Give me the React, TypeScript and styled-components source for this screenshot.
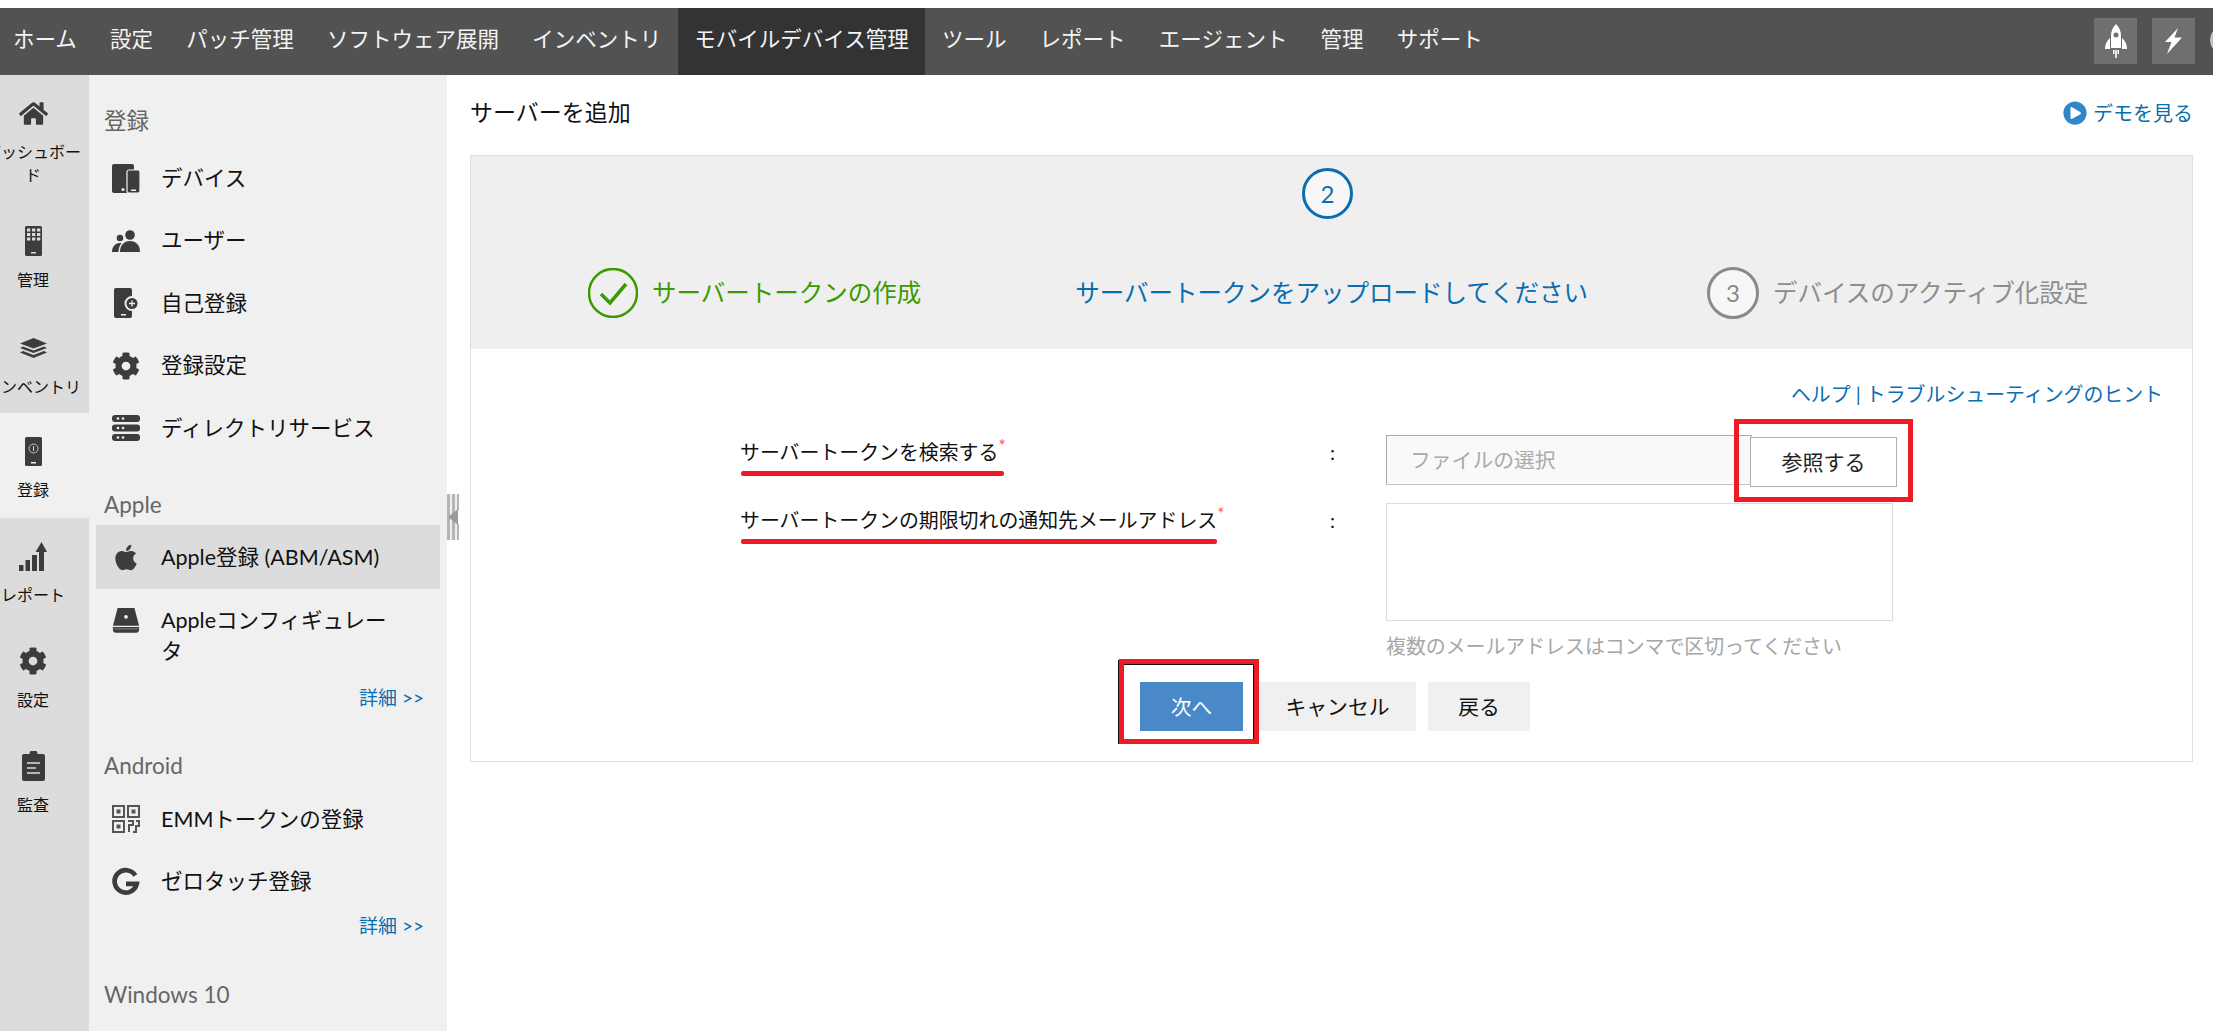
import React from "react";
import styled, { createGlobalStyle } from "styled-components";
import { FaApple, FaCog, FaHome, FaPlayCircle } from "react-icons/fa";

const Global = createGlobalStyle`
  html, body { margin: 0; padding: 0; background: #fff; }
  body { height: 1031px; overflow: hidden; font-family: Lato, "Noto Sans CJK JP", "Noto Sans", sans-serif; }
  * { box-sizing: border-box; }
`;

const Page = styled.div`
  width: 2213px;
  height: 1031px;
  padding-top: 8px;
  display: flex;
  flex-direction: column;
  overflow: hidden;
`;

const TopBar = styled.header`
  height: 67px;
  flex: none;
  background: #525252;
  display: flex;
  align-items: stretch;
  overflow: hidden;
`;

const NavItem = styled.div<{ $active?: boolean }>`
  padding: 0 16.6px 8px;
  display: flex;
  align-items: center;
  font-size: 21.5px;
  color: #f4f4f4;
  white-space: nowrap;
  background: ${(p) => (p.$active ? "#333333" : "transparent")};
  &:first-child { padding-left: 13px; }
`;

const TopTools = styled.div`
  margin-left: auto;
  display: flex;
  align-items: flex-start;
  gap: 15px;
  padding-top: 10px;
  margin-right: -27px;
`;

const ToolButton = styled.div`
  width: 43px;
  height: 46px;
  background: #6f6f6f;
  color: #fff;
  display: flex;
  align-items: center;
  justify-content: center;
`;

const ToolDot = styled.div`
  width: 30px;
  height: 30px;
  margin-top: 7px;
  border-radius: 50%;
  background: #c4c4c4;
`;

const Body = styled.div`
  flex: 1;
  display: flex;
  min-height: 0;
`;

const Rail = styled.nav`
  width: 89px;
  flex: none;
  background: #dcdcdc;
  overflow: hidden;
`;

const RailItem = styled.div<{ $h: number; $active?: boolean }>`
  height: ${(p) => p.$h}px;
  width: 89px;
  padding: 24px 23px 0 0;
  display: flex;
  flex-direction: column;
  align-items: center;
  background: ${(p) => (p.$active ? "#f0f0f0" : "transparent")};
  color: #3c3c3c;
`;

const RailIcon = styled.div`
  height: 28px;
  display: flex;
  align-items: center;
  justify-content: center;
`;

const RailLabel = styled.div`
  margin-top: 13px;
  font-size: 16px;
  line-height: 23px;
  color: #111;
  text-align: center;
  white-space: nowrap;
`;

const Panel = styled.aside`
  width: 358px;
  flex: none;
  background: #f0f0f0;
  padding: 29px 7px 0;
  overflow: hidden;
`;

const PanelTitle = styled.div<{ $mt?: number; $mb: number }>`
  margin-top: ${(p) => p.$mt ?? 0}px;
  margin-bottom: ${(p) => p.$mb}px;
  padding-left: 8px;
  height: 34px;
  line-height: 34px;
  font-size: 22.5px;
  color: #666;
`;

const PanelItem = styled.div<{ $active?: boolean }>`
  height: ${(p) => (p.$active ? 64 : 62.5)}px;
  width: 344px;
  display: flex;
  align-items: center;
  padding: 0 16px;
  font-size: 21.5px;
  line-height: 31px;
  color: #111;
  background: ${(p) => (p.$active ? "#dcdcdc" : "transparent")};
`;

const WrappedPanelItem = styled(PanelItem)`
  height: 96px;
  align-items: flex-start;
  padding: 16px 48px 0 16px;
`;

const PanelIcon = styled.div`
  width: 28px;
  height: 30px;
  flex: none;
  margin-right: 21px;
  color: #3c3c3c;
  display: flex;
  align-items: center;
  justify-content: center;
`;

const MoreLink = styled.div`
  width: 328px;
  height: 26px;
  line-height: 26px;
  text-align: right;
  font-size: 19px;
  color: #0a6db0;
`;

const Splitter = styled.div`
  width: 23px;
  flex: none;
  padding-top: 419px;
`;

const Handle = styled.div`
  position: relative;
  width: 12px;
  height: 46px;
  background: repeating-linear-gradient(90deg, #b5b5b5 0 3px, #efefef 3px 5px);
  &::after {
    content: "";
    position: absolute;
    left: 1px;
    top: 15px;
    border-style: solid;
    border-width: 8px 10px 8px 0;
    border-color: transparent #9a9a9a transparent transparent;
    filter: drop-shadow(2px 0 0 #fff);
  }
`;

const Main = styled.main`
  flex: 1;
  min-width: 0;
  padding-right: 20px;
`;

const TitleRow = styled.div`
  height: 80px;
  display: flex;
  align-items: flex-start;
  justify-content: space-between;
  padding-top: 20px;
`;

const PageTitle = styled.h1`
  margin: 0;
  font-size: 23px;
  line-height: 34px;
  font-weight: 400;
  color: #111;
`;

const DemoLink = styled.div`
  margin-top: 1px;
  display: flex;
  align-items: center;
  gap: 6px;
  font-size: 20px;
  line-height: 34px;
  color: #0a6db0;
  svg { color: #2f87c8; }
`;

const Card = styled.section`
  height: 607px;
  border: 1px solid #dfdfdf;
  display: flex;
  flex-direction: column;
`;

const StepHeader = styled.div`
  height: 193px;
  flex: none;
  background: #efefef;
  display: flex;
  flex-direction: column;
  align-items: center;
  padding-top: 12px;
`;

const StepBadge = styled.div<{ $color: string; $size?: number; $shift?: number }>`
  width: ${(p) => p.$size ?? 51}px;
  height: ${(p) => p.$size ?? 51}px;
  margin-right: ${(p) => p.$shift ?? 0}px;
  flex: none;
  border: 3px solid ${(p) => p.$color};
  border-radius: 50%;
  background: #f7f7f7;
  color: ${(p) => p.$color};
  font-size: 24px;
  display: flex;
  align-items: center;
  justify-content: center;
`;

const StepRow = styled.div`
  width: 100%;
  margin-top: 48px;
  padding-left: 117px;
  display: flex;
  align-items: center;
`;

const Step = styled.div<{ $color: string; $ml: number }>`
  margin-left: ${(p) => p.$ml}px;
  display: flex;
  align-items: center;
  gap: 14px;
  color: ${(p) => p.$color};
  font-size: 24.5px;
  line-height: 50px;
  white-space: nowrap;
`;

const FormArea = styled.div`
  flex: 1;
  position: relative;
  padding-top: 28px;
`;

const HelpRow = styled.div`
  padding-right: 29px;
  text-align: right;
  font-size: 19.9px;
  line-height: 34px;
  color: #0a6db0;
`;

const FormRow = styled.div<{ $mt: number; $h: number }>`
  margin-top: ${(p) => p.$mt}px;
  min-height: ${(p) => p.$h}px;
  padding-left: 269px;
  display: grid;
  grid-template-columns: 646px 1fr;
  align-items: start;
`;

const LabelCell = styled.div`
  position: relative;
  padding-top: 2px;
  display: flex;
  justify-content: space-between;
  font-size: 19.9px;
  line-height: 30px;
  color: #111;
  white-space: nowrap;
`;

const LabelText = styled.span<{ $ext: number }>`
  position: relative;
  &::after {
    content: "";
    position: absolute;
    left: 1px;
    right: ${(p) => -p.$ext}px;
    bottom: -9px;
    height: 5px;
    border-radius: 2px;
    background: #ed1c24;
  }
`;

const Asterisk = styled.span`
  position: absolute;
  left: 100%;
  top: -3px;
  margin-left: 0;
  font-size: 17px;
  line-height: 24px;
  color: #f0525a;
`;

const Colon = styled.span`
  font-size: 20px;
  padding-right: 51px;
`;

const FileField = styled.div`
  width: 366px;
  height: 50px;
  flex: none;
  background: #f9f9f9;
  border: 1px solid #c4c4c4;
  border-top-color: #aaa;
  border-left-color: #aaa;
  color: #aaa;
  font-size: 20.8px;
  line-height: 48px;
  padding-left: 23px;
`;

const BrowseButton = styled.div`
  width: 147px;
  height: 50px;
  flex: none;
  margin: 2px 0 0 -2px;
  background: #fff;
  border: 1px solid #b0b0b0;
  font-size: 21px;
  line-height: 48px;
  text-align: center;
  color: #222;
`;

const FileGroup = styled.div`
  position: relative;
  display: flex;
  width: 511px;
`;

const RedBox = styled.div`
  position: absolute;
  left: 348px;
  top: -16px;
  width: 179px;
  height: 83px;
  border: 5px solid #ed1c24;
  pointer-events: none;
`;

const MailArea = styled.div`
  width: 507px;
  height: 118px;
  background: #fff;
  border: 1px solid #dcdcdc;
`;

const Hint = styled.div`
  margin-top: 8px;
  font-size: 19.9px;
  line-height: 34px;
  color: #a6a6a6;
  white-space: nowrap;
`;

const Actions = styled.div`
  margin-top: 18px;
  padding-left: 669px;
  display: flex;
`;

const Btn = styled.div<{ $w: number; $ml?: number; $primary?: boolean }>`
  width: ${(p) => p.$w}px;
  margin-left: ${(p) => p.$ml ?? 0}px;
  height: 49px;
  line-height: 49px;
  text-align: center;
  font-size: 20.8px;
  background: ${(p) => (p.$primary ? "#4a89c8" : "#f0f0f0")};
  color: ${(p) => (p.$primary ? "#fff" : "#111")};
`;

const ActionBox = styled.div`
  position: absolute;
  left: 648px;
  top: 310px;
  width: 140px;
  height: 85px;
  border: 5px solid #ed1c24;
  pointer-events: none;
  &::after {
    content: "";
    position: absolute;
    inset: 0;
    border-top: 1px solid #111;
    border-right: 1px solid #111;
  }
  &::before {
    content: "";
    position: absolute;
    left: -6px;
    top: -4px;
    bottom: -5px;
    width: 1px;
    background: #111;
  }
`;

const DeviceIcon = () => (
  <svg width="28" height="29" viewBox="0 0 28 29" fill="currentColor">
    <rect width="22" height="29" rx="2" />
    <circle cx="11" cy="25.500" r="1.500" fill="#f0f0f0" />
    <rect x="15" y="6" width="13" height="23" rx="2" stroke="#f0f0f0" strokeWidth="1.200" />
    <rect x="19" y="25.500" width="5" height="1.500" fill="#f0f0f0" />
  </svg>
);

const UsersIcon = () => (
  <svg width="28" height="22" viewBox="0 0 28 22" fill="currentColor">
    <circle cx="18" cy="5" r="4.800" />
    <path d="M8 22c0-7 4-11 10-11s10 4 10 11z" />
    <circle cx="8" cy="8" r="3.300" />
    <path d="M0 22c0-5 3-9 8-9 .5 0 1 0 1.500.2C7.500 15.500 6.500 18.500 6.500 22z" />
  </svg>
);

const SelfEnrollIcon = () => (
  <svg width="24" height="30" viewBox="0 0 24 30" fill="currentColor">
    <path d="M2 0h14a2 2 0 0 1 2 2v6a7.500 7.500 0 0 0 0 15v5a2 2 0 0 1-2 2H2a2 2 0 0 1-2-2V2a2 2 0 0 1 2-2z" />
    <rect x="7" y="26" width="5" height="1.500" fill="#f0f0f0" />
    <circle cx="18" cy="15.500" r="5.500" />
    <path d="M18 12.500v6M15 15.500h6" stroke="#f0f0f0" strokeWidth="1.300" />
  </svg>
);

const ServerIcon = () => (
  <svg width="28" height="26" viewBox="0 0 28 26" fill="currentColor">
    {[0, 9.500, 19].map((y) => (
      <g key={y}>
        <rect y={y} width="28" height="7" rx="3" />
        <circle cx="6" cy={y + 3.500} r="1.300" fill="#f0f0f0" />
        <circle cx="11" cy={y + 3.500} r="1.300" fill="#f0f0f0" />
      </g>
    ))}
  </svg>
);

const ManageIcon = () => (
  <svg width="17" height="30" viewBox="0 0 17 30" fill="currentColor">
    <rect width="17" height="30" rx="1.500" />
    {[2.500, 7, 11.500].map((y) =>
      [2, 7, 12].map((x) => <rect key={`${x}-${y}`} x={x} y={y} width="3.300" height="3" fill="#dcdcdc" />)
    )}
    <rect x="6" y="26" width="5" height="1.500" fill="#dcdcdc" />
  </svg>
);

const LayersIcon = () => (
  <svg width="27" height="20" viewBox="0 0 27 20" fill="currentColor">
    <path d="M13.500 0L27 5.500 13.500 10.500 0 5.500z" />
    <path d="M3 8.500l10.500 4 10.500-4L27 10 13.500 15 0 10z" />
    <path d="M3 13l10.500 4L24 13l3 1.500L13.500 20 0 14.500z" />
  </svg>
);

const EnrollRailIcon = () => (
  <svg width="17" height="29" viewBox="0 0 17 29" fill="currentColor">
    <rect width="17" height="29" rx="1.500" />
    <circle cx="8.500" cy="11.500" r="4.500" fill="none" stroke="#cfcfcf" strokeWidth="0.900" />
    <path d="M8.500 9v5" stroke="#cfcfcf" strokeWidth="1" />
    <rect x="6" y="25" width="5" height="1.500" fill="#f0f0f0" />
  </svg>
);

const ReportIcon = () => (
  <svg width="28" height="29" viewBox="0 0 28 29" fill="currentColor">
    <rect x="0" y="23" width="4.500" height="6" />
    <rect x="6.500" y="18" width="4.500" height="11" />
    <rect x="13" y="13" width="5" height="16" />
    <path d="M20 29V10h-3.500L22.500 0 28 10h-3v19z" />
  </svg>
);

const AuditIcon = () => (
  <svg width="23" height="30" viewBox="0 0 23 30" fill="currentColor">
    <path d="M2 3h5.500a4 4 0 0 1 8 0H21a2 2 0 0 1 2 2v23a2 2 0 0 1-2 2H2a2 2 0 0 1-2-2V5a2 2 0 0 1 2-2z" />
    <path d="M5 12h13M5 17h9M5 22h13" stroke="#dcdcdc" strokeWidth="1.600" />
  </svg>
);

const ConfiguratorIcon = () => (
  <svg width="30" height="27" viewBox="0 0 30 27" fill="currentColor">
    <path d="M6 0h18l5 19H1z" />
    <path d="M1 20.500h28v3a3 3 0 0 1-3 3H4a3 3 0 0 1-3-3z" />
    <rect x="2" y="22" width="26" height="1" fill="#888" />
    <circle cx="15" cy="9.500" r="2" fill="#f0f0f0" />
  </svg>
);

const QrIcon = () => (
  <svg width="28" height="28" viewBox="0 0 28 28" fill="none" stroke="#555" strokeWidth="2">
    <rect x="1" y="1" width="11" height="11" />
    <rect x="16" y="1" width="11" height="11" />
    <rect x="1" y="16" width="11" height="11" />
    <rect x="4.500" y="4.500" width="4" height="4" fill="#555" stroke="none" />
    <rect x="19.500" y="4.500" width="4" height="4" fill="#555" stroke="none" />
    <rect x="4.500" y="19.500" width="4" height="4" fill="#555" stroke="none" />
    <path d="M16 16h5v4h-4v7M24 16h3v5h-3v6h-3" />
  </svg>
);

const GoogleIcon = () => (
  <svg width="30" height="30" viewBox="0 0 30 30" fill="none" stroke="#3c3c3c" strokeWidth="5">
    <path d="M25 8a12 12 0 1 0 1.500 9H15" />
  </svg>
);

const RocketIcon = () => (
  <svg width="22" height="34" viewBox="0 0 22 34" fill="#fff">
    <path d="M11 0c4 4 5 8 5 12v12H6V12c0-4 1-8 5-12z" />
    <circle cx="11" cy="11" r="2.500" fill="#6f6f6f" />
    <path d="M5 14v11H0c0-5 2-8 5-11zM17 14v11h5c0-5-2-8-5-11z" />
    <path d="M8 26h1.500v4H8zM10.200 26h1.600v8h-1.600zM12.500 26H14v4h-1.500z" />
  </svg>
);

const BoltIcon = () => (
  <svg width="17" height="26" viewBox="0 0 17 26" fill="#fff">
    <path d="M13 0L0 14h6.500L2 26 17 9.500H9.500z" />
  </svg>
);

const CheckIcon = () => (
  <svg width="50" height="50" viewBox="0 0 50 50" fill="none" stroke="#3c9a00">
    <circle cx="25" cy="25" r="24" strokeWidth="2.500" />
    <path d="M13 26l9 9 16-19" strokeWidth="3.500" />
  </svg>
);

const rail = [
  { h: 128, icon: <FaHome size={29} />, label: <>ダッシュボー<br />ド</> },
  { h: 107, icon: <ManageIcon />, label: "管理" },
  { h: 103, icon: <LayersIcon />, label: "インベントリ" },
  { h: 105, icon: <EnrollRailIcon />, label: "登録", active: true },
  { h: 105, icon: <ReportIcon />, label: "レポート" },
  { h: 105, icon: <FaCog size={28} />, label: "設定" },
  { h: 105, icon: <AuditIcon />, label: "監査" },
];

const nav = ["ホーム", "設定", "パッチ管理", "ソフトウェア展開", "インベントリ", "モバイルデバイス管理", "ツール", "レポート", "エージェント", "管理", "サポート"];

export default function App() {
  return (
    <Page>
      <Global />
      <TopBar>
        {nav.map((n) => (
          <NavItem key={n} $active={n === "モバイルデバイス管理"}>{n}</NavItem>
        ))}
        <TopTools>
          <ToolButton><RocketIcon /></ToolButton>
          <ToolButton><BoltIcon /></ToolButton>
          <ToolDot />
        </TopTools>
      </TopBar>
      <Body>
        <Rail>
          {rail.map((r, i) => (
            <RailItem key={i} $h={r.h} $active={r.active}>
              <RailIcon>{r.icon}</RailIcon>
              <RailLabel>{r.label}</RailLabel>
            </RailItem>
          ))}
        </Rail>
        <Panel>
          <PanelTitle $mb={9}>登録</PanelTitle>
          <PanelItem><PanelIcon><DeviceIcon /></PanelIcon>デバイス</PanelItem>
          <PanelItem><PanelIcon><UsersIcon /></PanelIcon>ユーザー</PanelItem>
          <PanelItem><PanelIcon><SelfEnrollIcon /></PanelIcon>自己登録</PanelItem>
          <PanelItem><PanelIcon><FaCog size={28} /></PanelIcon>登録設定</PanelItem>
          <PanelItem><PanelIcon><ServerIcon /></PanelIcon>ディレクトリサービス</PanelItem>
          <PanelTitle $mt={28.5} $mb={3}>Apple</PanelTitle>
          <PanelItem $active><PanelIcon><FaApple size={29} /></PanelIcon>Apple登録 (ABM/ASM)</PanelItem>
          <WrappedPanelItem><PanelIcon><ConfiguratorIcon /></PanelIcon><span>Appleコンフィギュレータ</span></WrappedPanelItem>
          <MoreLink>詳細 &gt;&gt;</MoreLink>
          <PanelTitle $mt={38} $mb={5}>Android</PanelTitle>
          <PanelItem><PanelIcon><QrIcon /></PanelIcon>EMMトークンの登録</PanelItem>
          <PanelItem><PanelIcon><GoogleIcon /></PanelIcon>ゼロタッチ登録</PanelItem>
          <MoreLink>詳細 &gt;&gt;</MoreLink>
          <PanelTitle $mt={39} $mb={0}>Windows 10</PanelTitle>
        </Panel>
        <Splitter><Handle /></Splitter>
        <Main>
          <TitleRow>
            <PageTitle>サーバーを追加</PageTitle>
            <DemoLink><FaPlayCircle size={24} />デモを見る</DemoLink>
          </TitleRow>
          <Card>
            <StepHeader>
              <StepBadge $color="#0a6db0" $shift={8}>2</StepBadge>
              <StepRow>
                <Step $color="#3c9a00" $ml={0}><CheckIcon />サーバートークンの作成</Step>
                <Step $color="#0a6db0" $ml={154}>サーバートークンをアップロードしてください</Step>
                <Step $color="#8d8d8d" $ml={119}><StepBadge $color="#8a8a8a" $size={52}>3</StepBadge>デバイスのアクティブ化設定</Step>
              </StepRow>
            </StepHeader>
            <FormArea>
              <HelpRow>ヘルプ | トラブルシューティングのヒント</HelpRow>
              <FormRow $mt={24} $h={68}>
                <LabelCell>
                  <LabelText $ext={6}>サーバートークンを検索する<Asterisk>*</Asterisk></LabelText>
                  <Colon>:</Colon>
                </LabelCell>
                <FileGroup>
                  <FileField>ファイルの選択</FileField>
                  <BrowseButton>参照する</BrowseButton>
                  <RedBox />
                </FileGroup>
              </FormRow>
              <FormRow $mt={0} $h={161}>
                <LabelCell>
                  <LabelText $ext={0}>サーバートークンの期限切れの通知先メールアドレス<Asterisk>*</Asterisk></LabelText>
                  <Colon>:</Colon>
                </LabelCell>
                <div>
                  <MailArea />
                  <Hint>複数のメールアドレスはコンマで区切ってください</Hint>
                </div>
              </FormRow>
              <Actions>
                <Btn $primary $w={103}>次へ</Btn>
                <Btn $w={157} $ml={16}>キャンセル</Btn>
                <Btn $w={102} $ml={12}>戻る</Btn>
              </Actions>
              <ActionBox />
            </FormArea>
          </Card>
        </Main>
      </Body>
    </Page>
  );
}
